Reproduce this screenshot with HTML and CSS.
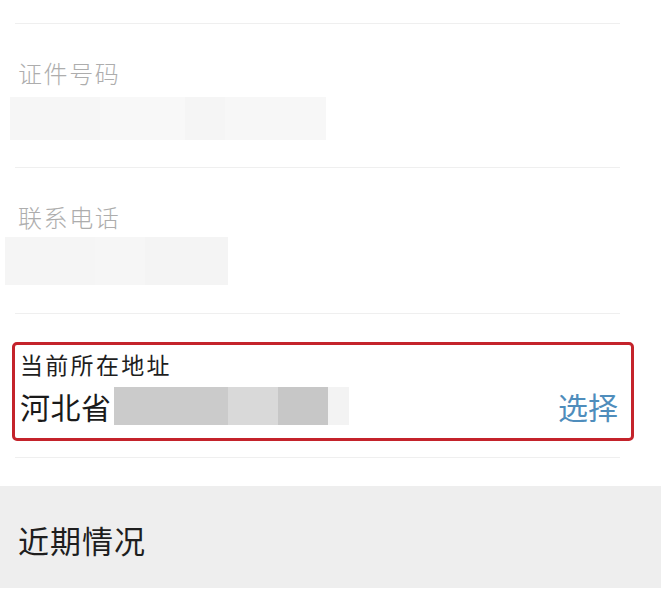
FILE: index.html
```html
<!DOCTYPE html>
<html lang="zh-CN">
<head>
<meta charset="utf-8">
<title>表单</title>
<link rel="stylesheet" href="styles.css">
</head>
<body>
<div class="form">
  <div class="field field-top"></div>
  <div class="field field-id">
    <div class="label">证件号码</div>
    <div class="blur blur-id"><span class="seg s1"></span><span class="seg s2"></span><span class="seg s3"></span><span class="seg s4"></span></div>
  </div>
  <div class="field field-phone">
    <div class="label">联系电话</div>
    <div class="blur blur-phone"><span class="seg s1"></span><span class="seg s2"></span><span class="seg s3"></span></div>
  </div>
  <div class="field field-addr">
    <div class="highlight">
      <div class="addr-label">当前所在地址</div>
      <div class="addr-row">
        <div class="addr-value">
          <span class="prov">河北省</span>
          <span class="mask"><span class="m m1"></span><span class="m m2"></span><span class="m m3"></span><span class="m m4"></span></span>
        </div>
        <span class="pick">选择</span>
      </div>
    </div>
  </div>
  <div class="section">近期情况</div>
</div>
</body>
</html>
```
FILE: styles.css
```css
* { box-sizing: border-box; }
html, body {
  margin: 0;
  padding: 0;
  background: #ffffff;
  font-family: "Noto Sans CJK SC", "Noto Sans", sans-serif;
}
.form {
  width: 661px;
  height: 592px;
  overflow: hidden;
}
.field {
  margin: 0 41px 0 15px;
  border-bottom: 1px solid #efefef;
}
.field-top { height: 24px; }
.label {
  padding-left: 3px;
  font-size: 24px;
  letter-spacing: 1.6px;
  line-height: 30px;
  font-weight: 300;
  color: #adadad;
}
.field-id { padding: 34px 0 27px; }
.field-phone { padding: 34px 0 28px; }
.blur {
  display: flex;
}
.blur .seg { display: block; height: 100%; }
.blur-id {
  margin: 9px 0 0 -5px;
  width: 316px;
  height: 43px;
}
.blur-id .s1 { width: 90px; background: #f6f6f6; }
.blur-id .s2 { width: 85px; background: #f8f8f8; }
.blur-id .s3 { width: 40px; background: #f5f5f5; }
.blur-id .s4 { width: 101px; background: #f7f7f7; }
.blur-phone {
  margin: 5px 0 0 -10px;
  width: 223px;
  height: 48px;
}
.blur-phone .s1 { width: 90px; background: #f5f5f5; }
.blur-phone .s2 { width: 50px; background: #f6f6f6; }
.blur-phone .s3 { width: 83px; background: #f4f4f4; }
.field-addr { padding: 28px 0 16px; }
.highlight {
  margin: 0 -14px 0 -3px;
  height: 99px;
  border: 3px solid #c4232b;
  border-radius: 5px;
  padding: 5px 13px 0 5px;
}
.addr-label {
  font-size: 23px;
  letter-spacing: 2.3px;
  line-height: 28px;
  color: #1e1e1e;
}
.addr-row {
  margin-top: 9px;
  display: flex;
  align-items: center;
  justify-content: space-between;
  height: 38px;
}
.addr-value {
  display: flex;
  align-items: center;
}
.prov {
  font-size: 30px;
  letter-spacing: 0.5px;
  line-height: 36px;
  color: #1a1a1a;
}
.mask {
  display: flex;
  height: 38px;
  margin-left: 2px;
}
.mask .m { display: block; height: 100%; }
.mask .m1 { width: 114px; background: #cbcbcb; }
.mask .m2 { width: 50px; background: #d9d9d9; }
.mask .m3 { width: 50px; background: #c7c7c7; }
.mask .m4 { width: 21px; background: #f3f3f3; }
.pick {
  font-size: 30px;
  line-height: 36px;
  color: #4f8dbc;
}
.section {
  margin-top: 28px;
  height: 102px;
  background: #eeeeee;
  padding: 36px 0 0 18px;
  font-size: 31px;
  letter-spacing: 1px;
  line-height: 36px;
  color: #1e1e1e;
}
```
